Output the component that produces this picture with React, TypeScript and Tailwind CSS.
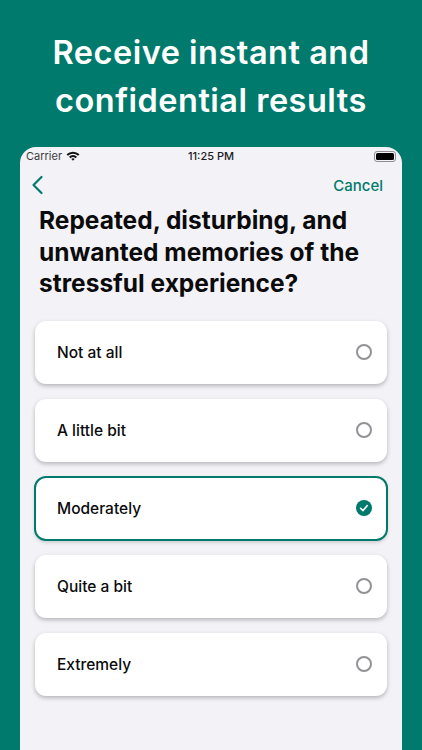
import React from 'react';

const OPTIONS = ['Not at all', 'A little bit', 'Moderately', 'Quite a bit', 'Extremely'];
const SELECTED = 'Moderately';

const Radio = ({ checked }: { checked: boolean }) =>
  checked ? (
    <svg width="16" height="16" viewBox="0 0 16 16">
      <circle cx="8" cy="8" r="8" fill="#007a6c" />
      <path d="M4.6 8.3 L7 10.6 L11.3 5.6" fill="none" stroke="#fff" strokeWidth="1.6" strokeLinecap="round" strokeLinejoin="round" />
    </svg>
  ) : (
    <div className="w-4 h-4 rounded-full border-2 border-[#929297] bg-white" />
  );

export default function App() {
  return (
    <div className="w-[422px] h-[750px] overflow-hidden bg-[#007a6c] flex flex-col items-center font-['Inter',sans-serif]">
      <h1 className="pt-[29px] h-[147px] text-center text-white font-semibold text-[32.5px] leading-[48px] tracking-[0.5px] whitespace-nowrap">
        Receive instant and
        <br />
        confidential results
      </h1>

      <div className="w-[382px] flex-1 bg-[#f2f2f7] rounded-t-[16px] flex flex-col">
        {/* Status bar */}
        <div className="h-[18px] px-[6px] flex items-center justify-between text-[11px] leading-none text-[#1c1c1e]">
          <div className="w-[100px] flex items-center gap-[4px]">
            <span className="text-[#3a3a3c]">Carrier</span>
            <svg width="14" height="10" viewBox="0 0 14 10">
              <path d="M0.5 3.2 A9.5 9.5 0 0 1 13.5 3.2 L12 4.8 A7.4 7.4 0 0 0 2 4.8 Z" fill="#111" />
              <path d="M3 5.7 A5.8 5.8 0 0 1 11 5.7 L9.5 7.2 A3.6 3.6 0 0 0 4.5 7.2 Z" fill="#111" />
              <path d="M5.4 8 A2.3 2.3 0 0 1 8.6 8 L7 9.7 Z" fill="#111" />
            </svg>
          </div>
          <span className="font-medium">11:25 PM</span>
          <div className="w-[100px] flex justify-end items-center">
            <div className="w-[22px] h-[11px] rounded-[3px] border border-[#8e8e93] p-[1px]">
              <div className="w-full h-full rounded-[1.5px] bg-black" />
            </div>
          </div>
        </div>

        {/* Nav */}
        <div className="h-[39px] pl-[11px] pr-[19px] flex items-center justify-between">
          <svg width="13" height="20" viewBox="0 0 13 20">
            <path d="M10.5 2 L2.5 10 L10.5 18" fill="none" stroke="#007a6c" strokeWidth="2.2" strokeLinecap="round" strokeLinejoin="round" />
          </svg>
          <span className="pt-[4px] text-[15px] font-medium text-[#007a6c]">Cancel</span>
        </div>

        <h2 className="mt-[1px] pl-[19px] font-bold text-[24.5px] leading-[31.5px] text-[#0b0b0c] whitespace-nowrap">
          Repeated, disturbing, and
          <br />
          unwanted memories of the
          <br />
          stressful experience?
        </h2>

        {/* Options */}
        <div className="mt-[21px] px-[15px] flex flex-col gap-[15px]">
          {OPTIONS.map(label => {
            const checked = label === SELECTED;
            return (
              <div
                key={label}
                className={
                  checked
                    ? 'h-[63px] pl-[22px] pr-[15px] bg-white rounded-[11px] outline-2 -outline-offset-1 outline-[#007a6c] shadow-[0_2px_4px_rgba(0,0,0,0.2)] flex items-center justify-between'
                    : 'h-[63px] pl-[22px] pr-[15px] bg-white rounded-[11px] shadow-[0_2px_4px_rgba(0,0,0,0.25)] flex items-center justify-between'
                }
              >
                <span className="pt-[1px] text-[15.5px] font-medium text-[#0b0b0c]">{label}</span>
                <Radio checked={checked} />
              </div>
            );
          })}
        </div>
      </div>
    </div>
  );
}
